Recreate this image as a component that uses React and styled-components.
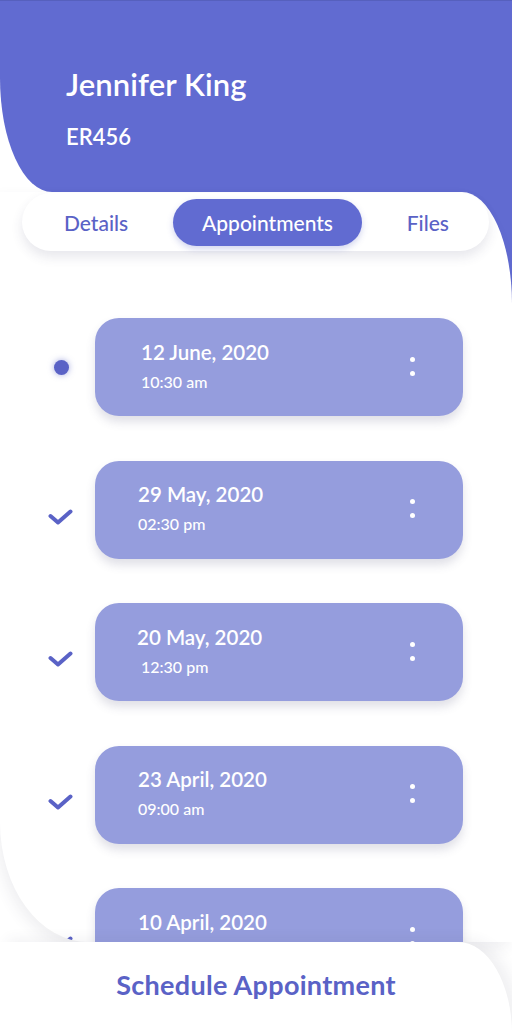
import React from "react";
import styled, { createGlobalStyle } from "styled-components";

const PURPLE = "#616bd1";
const CARD = "#959ddd";
const INK = "#5a62c6";

const Global = createGlobalStyle`
  html, body { margin: 0; padding: 0; background: #fff; }
  body { font-family: Lato, "Open Sans", sans-serif; -webkit-font-smoothing: antialiased; }
  * { box-sizing: border-box; }
`;

const Screen = styled.div`
  width: 512px;
  height: 1034px;
  overflow: hidden;
  background: #fff;
  display: flex;
  flex-direction: column;
`;

const Top = styled.div`
  background: linear-gradient(90deg, #fff 50%, ${PURPLE} 50%);
  display: flex;
  flex-direction: column;
`;

const Header = styled.header`
  height: 192px;
  background: ${PURPLE};
  border-top: 1px solid #5660bd;
  border-bottom-left-radius: 52px 114px;
  padding: 64px 0 0 66px;
  color: #fff;
`;

const Name = styled.h1`
  margin: 0;
  font-size: 31px;
  line-height: 38px;
  font-weight: 600;
  letter-spacing: 0.1px;
`;

const Code = styled.div`
  margin-top: 21px;
  font-size: 22px;
  line-height: 26px;
  font-weight: 600;
`;

const Body = styled.section`
  height: 750px;
  background: #fff;
  border-top-right-radius: 50px 112px;
  border-bottom-left-radius: 88px 120px;
  box-shadow: -4px 6px 14px rgba(60, 60, 90, 0.08);
  display: flex;
  flex-direction: column;
`;

const TabBar = styled.nav`
  position: relative;
  z-index: 2;
  margin: 1px 23px 0 22px;
  height: 58px;
  border-radius: 29px;
  background: #fff;
  box-shadow: 0 6px 12px rgba(60, 60, 100, 0.12);
  display: flex;
  align-items: center;
  justify-content: space-between;
  padding: 0 11px 0 13px;
`;

const Tab = styled.button`
  border: 0;
  height: 47px;
  padding: 0 29px;
  border-radius: 24px;
  font-family: inherit;
  font-size: 21px;
  font-weight: 500;
  background: ${(p) => (p.$active ? PURPLE : "transparent")};
  color: ${(p) => (p.$active ? "#fff" : INK)};
  box-shadow: ${(p) => (p.$active ? "0 3px 6px rgba(80,90,190,0.25)" : "none")};
`;

const List = styled.div`
  flex: 1;
  overflow: hidden;
  border-bottom-left-radius: 88px 120px;
  padding-top: 67px;
  display: flex;
  flex-direction: column;
  gap: 44.5px;
`;

const Row = styled.div`
  display: flex;
  align-items: center;
  flex-shrink: 0;
`;

const Marker = styled.div`
  width: 44px;
  margin: 0 12px 0 39px;
  display: flex;
  justify-content: center;
  align-items: center;
  padding-top: ${(p) => (p.$done ? "14px" : "0")};
`;

const Dot = styled.span`
  width: 15px;
  height: 15px;
  border-radius: 50%;
  background: ${INK};
  box-shadow: 0 0 6px rgba(90, 98, 198, 0.55);
`;

const Card = styled.div`
  width: 368px;
  height: 98px;
  border-radius: 24px;
  background: ${CARD};
  box-shadow: 0 6px 10px rgba(70, 70, 110, 0.17);
  display: flex;
  align-items: center;
  justify-content: space-between;
  padding: 0 48px 0 ${(p) => p.$pad}px;
  color: #fff;
`;

const Texts = styled.div`
  display: flex;
  flex-direction: column;
  gap: 9px;
  margin-top: -4px;
`;

const DateText = styled.div`
  font-size: 20.5px;
  line-height: 24px;
  font-weight: 600;
`;

const TimeText = styled.div`
  font-size: 16px;
  line-height: 18px;
  font-weight: 500;
  padding-left: ${(p) => p.$shift || 0}px;
`;

const Menu = styled.div`
  display: flex;
  flex-direction: column;
  gap: 9px;
  margin-top: -2px;
  span {
    width: 5px;
    height: 5px;
    border-radius: 50%;
    background: #fff;
  }
`;

const Footer = styled.footer`
  height: 92px;
  background: #fff;
  border-top-right-radius: 56px 96px;
  box-shadow: 8px -2px 14px rgba(60, 60, 90, 0.08);
  display: flex;
  justify-content: center;
  align-items: center;
  padding-bottom: 8px;
`;

const Schedule = styled.button`
  border: 0;
  background: transparent;
  font-family: inherit;
  font-size: 27px;
  font-weight: 700;
  color: ${INK};
  letter-spacing: 0.3px;
`;

const Check = () => (
  <svg width="26" height="18" viewBox="0 0 26 18">
    <polyline
      points="2.5,8 10,14.5 22.5,3.5"
      fill="none"
      stroke={INK}
      strokeWidth="4"
      strokeLinecap="round"
      strokeLinejoin="round"
    />
  </svg>
);

const items = [
  { date: "12 June, 2020", time: "10:30 am", done: false, pad: 46 },
  { date: "29 May, 2020", time: "02:30 pm", done: true, pad: 43 },
  { date: "20 May, 2020", time: "12:30 pm", done: true, pad: 42, shift: 4 },
  { date: "23 April, 2020", time: "09:00 am", done: true, pad: 43 },
  { date: "10 April, 2020", time: "11:00 am", done: true, pad: 43 },
];

export default function App() {
  return (
    <>
      <Global />
      <Screen>
        <Top>
          <Header>
            <Name>Jennifer King</Name>
            <Code>ER456</Code>
          </Header>
          <Body>
            <TabBar>
              <Tab>Details</Tab>
              <Tab $active>Appointments</Tab>
              <Tab>Files</Tab>
            </TabBar>
            <List>
              {items.map((it) => (
                <Row key={it.date}>
                  <Marker $done={it.done}>{it.done ? <Check /> : <Dot />}</Marker>
                  <Card $pad={it.pad}>
                    <Texts>
                      <DateText>{it.date}</DateText>
                      <TimeText $shift={it.shift}>{it.time}</TimeText>
                    </Texts>
                    <Menu>
                      <span />
                      <span />
                    </Menu>
                  </Card>
                </Row>
              ))}
            </List>
          </Body>
        </Top>
        <Footer>
          <Schedule>Schedule Appointment</Schedule>
        </Footer>
      </Screen>
    </>
  );
}
